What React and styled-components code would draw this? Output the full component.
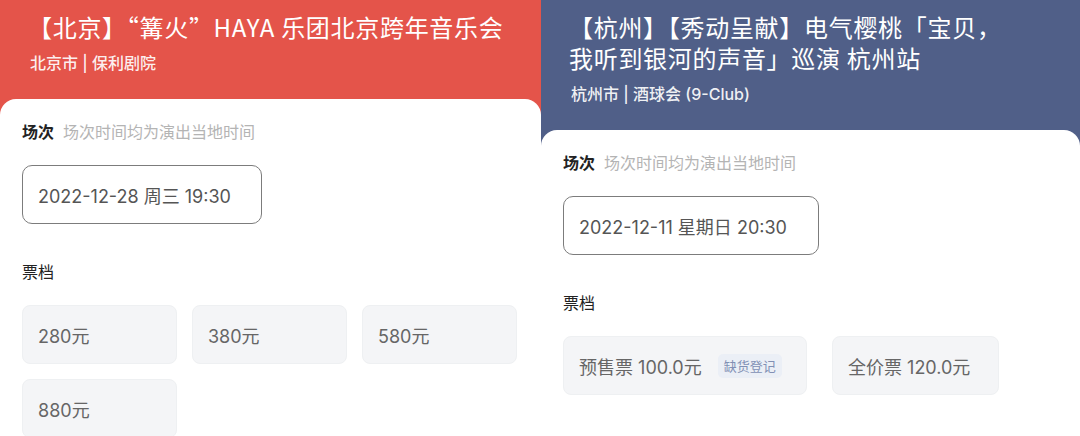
import React from 'react'
import styled, { createGlobalStyle } from 'styled-components'

const GlobalStyle = createGlobalStyle`
  html, body {
    margin: 0;
    padding: 0;
    background: #ffffff;
  }
  body {
    font-family: Inter, "Noto Sans CJK SC", "Noto Sans", sans-serif;
    -webkit-font-smoothing: antialiased;
  }
`

const Page = styled.div`
  display: flex;
  width: 1080px;
  height: 436px;
  overflow: hidden;
`

const Panel = styled.section`
  display: flex;
  flex-direction: column;
  width: ${p => p.width}px;
  flex-shrink: 0;
  background: ${p => p.bg};
`

const Header = styled.header`
  padding: 11px 24px 24px 28px;
  color: #ffffff;
`

const Title = styled.h1`
  margin: 0;
  font-family: "Noto Sans CJK SC", sans-serif;
  font-size: 24px;
  line-height: 31px;
  font-weight: 400;
  letter-spacing: 0.7px;
`

const Venue = styled.div`
  margin-top: 9px;
  padding-left: 2px;
  font-size: 16px;
  line-height: 24px;
  font-weight: 500;
  color: rgba(255, 255, 255, 0.92);
`

const Card = styled.div`
  flex: 1;
  background: #ffffff;
  border-radius: 16px 16px 0 0;
  padding: 21px 22px 0 22px;
  display: flex;
  flex-direction: column;
`

const SectionLabel = styled.div`
  display: flex;
  align-items: center;
  gap: 9px;
  font-size: 16px;
  line-height: 24px;
  color: #222;
  font-weight: ${p => (p.bold ? 700 : 400)};
  margin-top: ${p => p.offset || 0}px;
`

const Hint = styled.span`
  font-weight: 400;
  color: #b4b4b4;
`

const DateBox = styled.div`
  align-self: flex-start;
  margin-top: 21px;
  height: 59px;
  box-sizing: border-box;
  width: ${p => p.width}px;
  display: flex;
  align-items: center;
  padding: 0 15px;
  border: 1.5px solid #7c7c7c;
  border-radius: 10px;
  font-size: 18px;
  color: #555;
`

const PriceGrid = styled.div`
  margin-top: 21px;
  display: flex;
  flex-wrap: wrap;
  gap: 15px ${p => p.gap}px;
`

const PriceButton = styled.div`
  height: 59px;
  box-sizing: border-box;
  width: ${p => (p.width ? `${p.width}px` : 'auto')};
  display: flex;
  align-items: center;
  padding: 0 15px;
  background: #f4f5f7;
  border: 1px solid #eef0f2;
  border-radius: 8px;
  font-size: 18px;
  color: #666;
`

const Tag = styled.span`
  margin-left: 16px;
  padding: 2px 6px;
  border-radius: 5px;
  background: #ebeff6;
  color: #8190b4;
  font-size: 13px;
  line-height: 20px;
`

const ShowPanel = ({ bg, width, title, venue, date, dateWidth, gap, prices }) => (
  <Panel bg={bg} width={width}>
    <Header>
      <Title>{title}</Title>
      <Venue>{venue}</Venue>
    </Header>
    <Card>
      <SectionLabel bold>
        场次<Hint>场次时间均为演出当地时间</Hint>
      </SectionLabel>
      <DateBox width={dateWidth}>{date}</DateBox>
      <SectionLabel offset={36}>票档</SectionLabel>
      <PriceGrid gap={gap}>
        {prices.map(price => (
          <PriceButton key={price.label} width={price.width}>
            {price.label}
            {price.tag && <Tag>{price.tag}</Tag>}
          </PriceButton>
        ))}
      </PriceGrid>
    </Card>
  </Panel>
)

const App = () => (
  <Page>
    <GlobalStyle />
    <ShowPanel
      bg="#e4544a"
      width={541}
      title="【北京】“篝火”HAYA 乐团北京跨年音乐会"
      venue="北京市 | 保利剧院"
      date="2022-12-28 周三 19:30"
      dateWidth={240}
      gap={15}
      prices={[
        { label: '280元', width: 155 },
        { label: '380元', width: 155 },
        { label: '580元', width: 155 },
        { label: '880元', width: 155 },
      ]}
    />
    <ShowPanel
      bg="#505f88"
      width={539}
      title={<>【杭州】【秀动呈献】电气樱桃「宝贝，<br />我听到银河的声音」巡演 杭州站</>}
      venue="杭州市 | 酒球会 (9-Club)"
      date="2022-12-11 星期日 20:30"
      dateWidth={256}
      gap={25}
      prices={[
        { label: '预售票 100.0元', tag: '缺货登记', width: 244 },
        { label: '全价票 120.0元', width: 167 },
      ]}
    />
  </Page>
)

export default App
